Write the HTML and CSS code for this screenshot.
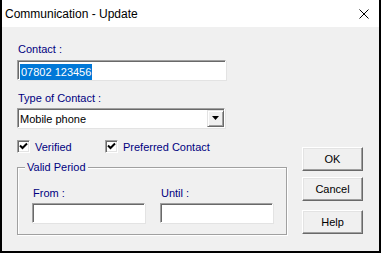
FILE: index.html
```html
<!DOCTYPE html>
<html lang="en">
<head>
  <meta charset="UTF-8" />
  <title>Communication - Update</title>
  <link rel="stylesheet" href="styles.css">
</head>
<body>
  <div class="dialog">
    <div class="titlebar">
      <span class="title">Communication - Update</span>
      <svg class="close" width="10" height="10" viewBox="0 0 10 10">
        <path d="M0.5 0.5 L9.5 9.5 M9.5 0.5 L0.5 9.5" stroke="#000" stroke-width="1" fill="none"/>
      </svg>
    </div>

    <div class="panel">
      <div class="main">
        <div class="label">Contact :</div>
        <div class="field contact"><span class="selected">07802 123456</span></div>

        <div class="label type-label">Type of Contact :</div>
        <div class="combo">
          <span class="combo-text">Mobile phone</span>
          <div class="drop-btn">
            <svg width="7" height="4" viewBox="0 0 7 4"><path d="M0 0 H7 L3.5 4 Z" fill="#000"/></svg>
          </div>
        </div>

        <div class="checks">
          <label class="check verified">
            <span class="box"><svg width="9" height="9" viewBox="0 0 9 9"><path d="M1 3.5 L3.5 6 L8 1.5" stroke="#000" stroke-width="2" fill="none"/></svg></span>
            <span class="check-text">Verified</span>
          </label>
          <label class="check">
            <span class="box"><svg width="9" height="9" viewBox="0 0 9 9"><path d="M1 3.5 L3.5 6 L8 1.5" stroke="#000" stroke-width="2" fill="none"/></svg></span>
            <span class="check-text">Preferred Contact</span>
          </label>
        </div>

        <div class="group">
          <span class="legend">Valid Period</span>
          <div class="group-row">
            <div class="group-col">
              <div class="label">From :</div>
              <div class="field date"></div>
            </div>
            <div class="group-col">
              <div class="label">Until :</div>
              <div class="field date"></div>
            </div>
          </div>
        </div>
      </div>

      <div class="buttons">
        <button class="btn ok">OK</button>
        <button class="btn cancel">Cancel</button>
        <button class="btn help">Help</button>
      </div>
    </div>
  </div>
</body>
</html>
```

FILE: styles.css
```css
body {
  margin: 0;
  font-family: 'Liberation Sans', Arial, sans-serif;
}

.dialog {
  width: 381px;
  height: 253px;
  box-sizing: border-box;
  border: 2px solid #000;
  border-top: none;
  background: #f0f0f0;
  display: flex;
  flex-direction: column;
}

.titlebar {
  height: 27px;
  background: #fff;
  display: flex;
  align-items: center;
  justify-content: space-between;
  padding: 0 10px 0 3px;
}

.title {
  font-size: 12px;
  color: #000;
}

.panel {
  flex: 1;
  display: flex;
  padding: 16px 0 0 15px;
}

.main {
  width: 270px;
  display: flex;
  flex-direction: column;
}

.label {
  height: 13px;
  line-height: 13px;
  font-size: 11px;
  color: #000080;
  padding-left: 1px;
}

.field {
  box-sizing: border-box;
  height: 20px;
  background: #fff;
  border-top: 1px solid #a0a0a0;
  border-left: 1px solid #a0a0a0;
  border-bottom: 1px solid #fff;
  border-right: 1px solid #fff;
  box-shadow: inset 1px 1px 0 #696969, -1px -1px 0 0 transparent, 1px 1px 0 #e3e3e3;
  padding: 1px 0 0 2px;
}

.contact {
  width: 209px;
  margin-top: 4px;
}

.selected {
  display: inline-block;
  height: 16px;
  line-height: 16px;
  font-size: 11px;
  color: #fff;
  background: #0078d7;
  padding: 0 1px;
}

.type-label {
  margin-top: 12px;
}

.combo {
  box-sizing: border-box;
  width: 208px;
  height: 20px;
  margin-top: 3px;
  background: #fff;
  border-top: 1px solid #a0a0a0;
  border-left: 1px solid #a0a0a0;
  border-bottom: 1px solid #fff;
  border-right: 1px solid #fff;
  box-shadow: inset 1px 1px 0 #696969, 1px 1px 0 #e3e3e3;
  display: flex;
  align-items: center;
  justify-content: space-between;
  padding: 1px 0 0 2px;
}

.combo-text {
  font-size: 11px;
  color: #000;
}

.drop-btn {
  box-sizing: border-box;
  width: 17px;
  height: 17px;
  margin-top: -1px;
  background: #f0f0f0;
  border-top: 1px solid #e3e3e3;
  border-left: 1px solid #e3e3e3;
  border-right: 1px solid #696969;
  border-bottom: 1px solid #696969;
  box-shadow: inset 1px 1px 0 #fff, inset -1px -1px 0 #a0a0a0;
  display: flex;
  align-items: center;
  justify-content: center;
}

.checks {
  display: flex;
  margin-top: 12px;
  height: 13px;
}

.check {
  display: flex;
  align-items: center;
  gap: 5px;
}

.verified {
  width: 88px;
}

.box {
  box-sizing: border-box;
  width: 13px;
  height: 13px;
  background: #fff;
  border-top: 1px solid #a0a0a0;
  border-left: 1px solid #a0a0a0;
  border-bottom: 1px solid #fff;
  border-right: 1px solid #fff;
  box-shadow: inset 1px 1px 0 #696969, inset -1px -1px 0 #e3e3e3;
  display: flex;
  align-items: center;
  justify-content: center;
}

.check-text {
  font-size: 11px;
  color: #000080;
}

.group {
  position: relative;
  box-sizing: border-box;
  height: 68px;
  margin-top: 14px;
  border: 1px solid #a0a0a0;
  box-shadow: inset 1px 1px 0 #fff, 1px 1px 0 #fff;
  padding: 19px 0 0 14px;
}

.legend {
  position: absolute;
  top: -7px;
  left: 7px;
  padding: 0 2px 0 2px;
  font-size: 11px;
  line-height: 13px;
  color: #000080;
  background: #f0f0f0;
}

.group-row {
  display: flex;
  gap: 15px;
}

.date {
  width: 113px;
  margin-top: 3px;
}

.buttons {
  display: flex;
  flex-direction: column;
  margin-left: 15px;
  padding-top: 104px;
}

.btn {
  box-sizing: border-box;
  width: 61px;
  height: 24px;
  padding: 0;
  font-family: 'Liberation Sans', Arial, sans-serif;
  font-size: 11px;
  color: #000;
  background: #f0f0f0;
  border-top: 1px solid #fff;
  border-left: 1px solid #fff;
  border-right: 1px solid #696969;
  border-bottom: 1px solid #696969;
  box-shadow: inset -1px -1px 0 #a0a0a0, inset 1px 1px 0 #e3e3e3;
}

.cancel {
  margin-top: 6px;
}

.help {
  margin-top: 9px;
}
```
